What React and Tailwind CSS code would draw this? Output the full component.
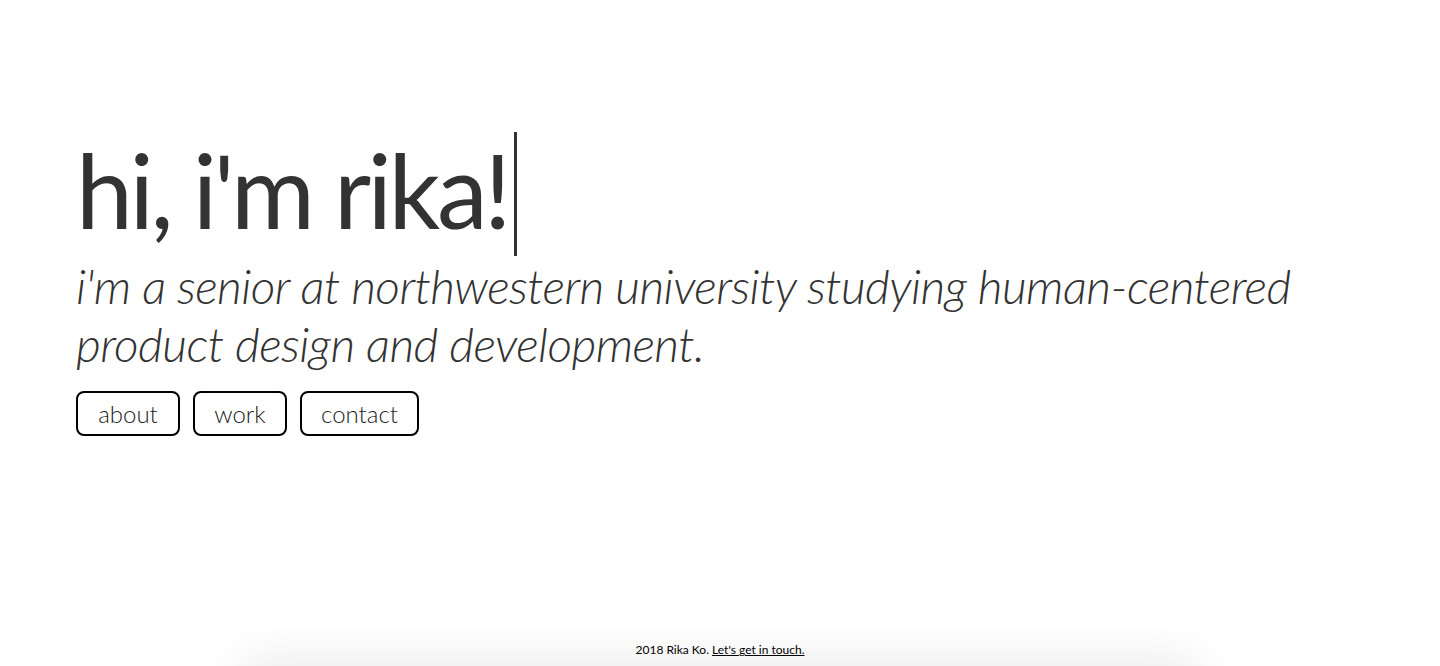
import React from "react";

export default function App() {
  return (
    <div className="min-h-screen flex flex-col bg-white text-[#333]" style={{ fontFamily: "Lato, 'Open Sans', sans-serif" }}>
      <main className="flex-1 pl-[76px] pt-[128px]">
        <h1 className="flex items-start text-[102px] leading-[124px] font-normal tracking-[-3.5px]">
          <span>hi, i'm rika!</span>
          <span className="mt-[4px] ml-[6px] h-[124px] w-[3px] bg-[#333]" />
        </h1>
        <p className="mt-[1px] max-w-[1260px] text-[48px] leading-[58px] font-light italic tracking-[-0.6px]">
          i'm a senior at northwestern university studying human-centered product design and development.
        </p>
        <nav className="mt-[18px] flex gap-[13px]">
          {[
            ["about", "w-[104px]"],
            ["work", "w-[94px]"],
            ["contact", "w-[119px]"],
          ].map(([t, w]) => (
            <a
              key={t}
              href="#"
              className={`${w} h-[45px] flex items-center justify-center rounded-[8px] border-2 border-black text-[24px] font-light text-[#222]`}
            >
              {t}
            </a>
          ))}
        </nav>
      </main>
      <footer className="relative h-[36px] flex items-start justify-center pt-[12px] overflow-hidden">
        <div className="absolute left-[250px] right-[250px] top-[40px] h-[40px] rounded-full shadow-[0_0_40px_20px_rgba(0,0,0,0.06)]" />
        <p className="relative text-[12px] leading-[16px] text-black">
          2018 Rika Ko. <a href="#" className="underline">Let's get in touch.</a>
        </p>
      </footer>
    </div>
  );
}
